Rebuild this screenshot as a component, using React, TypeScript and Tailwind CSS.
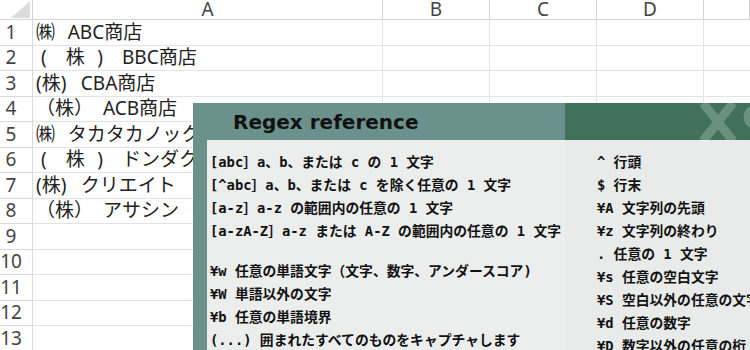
import React from "react";

const cellRows: string[] = [
  "㈱\u2002\u2009ABC商店",
  " (\u2003株\u2002\u2009)\u2003BBC商店",
  "(株)\u2002 CBA商店",
  "（株）  ACB商店",
  "㈱\u2002\u2009タカタカノックス",
  " (\u2003株\u2002\u2009)\u2003ドンダクション",
  "(株)\u2002 クリエイト",
  "（株）  アサシン",
  "",
  "",
  "",
  "",
  "",
];

const leftLines: string[] = [
  "[abc］a、b、または c の 1 文字",
  "[^abc］a、b、または c を除く任意の 1 文字",
  "[a-z］a-z の範囲内の任意の 1 文字",
  "[a-zA-Z］a-z または A-Z の範囲内の任意の 1 文字",
];
const leftLines2: string[] = [
  "¥w 任意の単語文字（文字、数字、アンダースコア)",
  "¥W 単語以外の文字",
  "¥b 任意の単語境界",
  "(...) 囲まれたすべてのものをキャプチャします",
];
const rightLines: string[] = [
  "^ 行頭",
  "$ 行末",
  "¥A 文字列の先頭",
  "¥z 文字列の終わり",
  ". 任意の 1 文字",
  "¥s 任意の空白文字",
  "¥S 空白以外の任意の文字",
  "¥d 任意の数字",
  "¥D 数字以外の任意の桁",
];

const cols = ["A", "B", "C", "D", ""];

export default function App() {
  return (
    <div className="relative w-[750px] h-[350px] overflow-hidden bg-white">
      {/* Spreadsheet */}
      <div
        className="grid grid-cols-[33px_350px_107px_107px_107px_46px] grid-rows-[20px_repeat(13,25.5px)] text-[#333]"
        style={{ fontFamily: '"Noto Sans", "Noto Sans CJK JP", sans-serif' }}
      >
        <div className="relative border-r border-b border-[#d4d4d4]">
          <svg className="absolute left-0 top-0" width="33" height="20" viewBox="0 0 33 20">
            <polygon points="30,1 30,18 11,18" fill="#dcdcdc" />
          </svg>
        </div>
        {cols.map((c, i) => (
          <div
            key={i}
            className="flex items-center justify-center border-r border-b border-[#d4d4d4] text-[19px] leading-none text-[#444]"
          >
            {c}
          </div>
        ))}
        {cellRows.map((txt, r) => (
          <React.Fragment key={r}>
            <div className="flex items-center border-r border-b border-[#d9d9d9]">
              <span className="w-[22px] text-center text-[19px] leading-none text-[#444]">{r + 1}</span>
            </div>
            <div className="flex items-center pl-[3px] border-r border-b border-[#e3e3e3] whitespace-pre text-[19px] leading-none text-[#222] overflow-visible">
              {txt}
            </div>
            <div className="border-r border-b border-[#e3e3e3]" />
            <div className="border-r border-b border-[#e3e3e3]" />
            <div className="border-r border-b border-[#e3e3e3]" />
            <div className="border-b border-[#e3e3e3]" />
          </React.Fragment>
        ))}
      </div>

      {/* Regex reference window */}
      <div className="absolute left-[193px] top-[103px] w-[600px] h-[300px] bg-[#6b918c] flex flex-col">
        <div className="h-[37px] flex shrink-0">
          <div className="w-[372px] flex items-center pl-[40px]">
            <span
              className="text-[20px] font-bold text-[#111] leading-none"
              style={{ fontFamily: '"DejaVu Sans", sans-serif' }}
            >
              Regex reference
            </span>
          </div>
          <div className="flex-1 relative bg-[#41715a] overflow-hidden">
            <svg className="absolute left-[130px] top-[-2px]" width="60" height="42" viewBox="0 0 60 42">
              <path d="M8 2 L38 40 M38 2 L8 40" stroke="rgba(255,255,255,0.22)" strokeWidth="9" fill="none" />
              <path d="M58 8 C50 10 50 22 58 24" stroke="rgba(255,255,255,0.22)" strokeWidth="7" fill="none" />
            </svg>
          </div>
        </div>
        <div
          className="flex-1 ml-[14px] bg-[linear-gradient(to_right,#eceeed_358px,#e8ebe9_358px)] flex pt-[11px] pl-[3px] text-[13.8px] leading-[23px] text-[#111] font-bold"
          style={{ fontFamily: '"DejaVu Sans Mono", "Noto Sans CJK JP", monospace' }}
        >
          <div className="w-[387px] whitespace-pre">
            {leftLines.map((l, i) => (
              <div key={i}>{l}</div>
            ))}
            <div className="h-[17px]" />
            {leftLines2.map((l, i) => (
              <div key={i}>{l}</div>
            ))}
          </div>
          <div className="whitespace-pre">
            {rightLines.map((l, i) => (
              <div key={i}>{l}</div>
            ))}
          </div>
        </div>
      </div>
    </div>
  );
}
